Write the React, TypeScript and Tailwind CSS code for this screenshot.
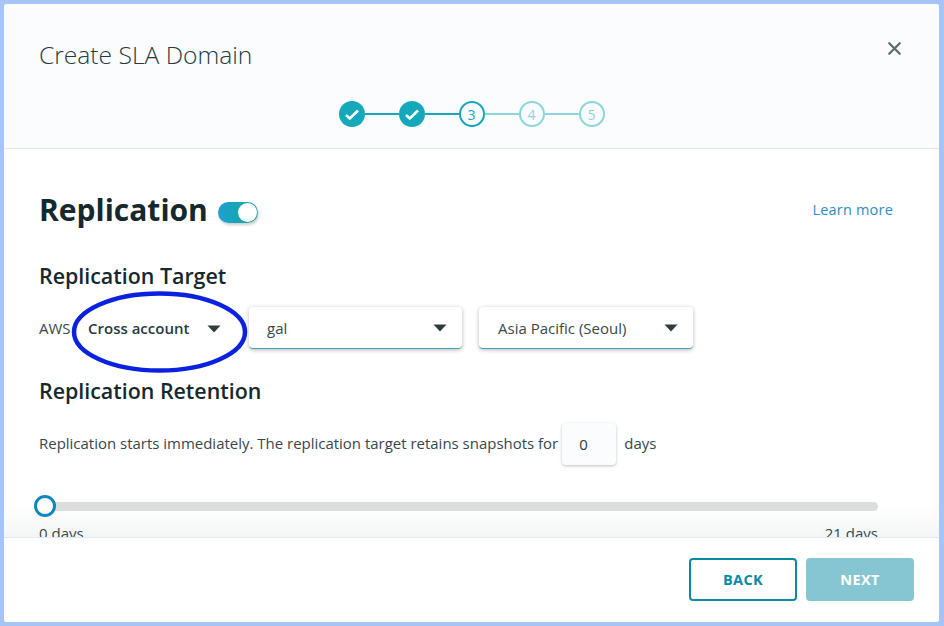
import { X } from "lucide-react";

const Caret = () => (
  <svg width="14" height="8" viewBox="0 0 14 8" className="shrink-0">
    <path d="M0.5 0.5h13L7 7.5z" fill="#2f3d41" />
  </svg>
);

const Check = () => (
  <svg width="16" height="13" viewBox="0 0 16 13" fill="none">
    <path d="M2 7l3.8 3.5L14 2.5" stroke="#fff" strokeWidth="2.6" />
  </svg>
);

function Stepper() {
  return (
    <div className="flex items-center justify-center h-[26px]">
      <div className="w-[26px] h-[26px] rounded-full bg-[#14a8bb] flex items-center justify-center"><Check /></div>
      <div className="w-[34px] h-[2px] bg-[#14a8bb]" />
      <div className="w-[26px] h-[26px] rounded-full bg-[#14a8bb] flex items-center justify-center"><Check /></div>
      <div className="w-[34px] h-[2px] bg-[#14a8bb]" />
      <div className="w-[26px] h-[26px] rounded-full border-[2px] border-[#14a8bb] flex items-center justify-center text-[14px] font-medium text-[#14a8bb]">3</div>
      <div className="w-[34px] h-[2px] bg-[#8ad5de]" />
      <div className="w-[26px] h-[26px] rounded-full border-[2px] border-[#8ad5de] flex items-center justify-center text-[14px] font-medium text-[#8ad5de]">4</div>
      <div className="w-[34px] h-[2px] bg-[#8ad5de]" />
      <div className="w-[26px] h-[26px] rounded-full border-[2px] border-[#8ad5de] flex items-center justify-center text-[14px] font-medium text-[#8ad5de]">5</div>
    </div>
  );
}

function Select({ label, className }: { label: string; className: string }) {
  return (
    <div className={"h-[42px] flex items-center justify-between pt-[2px] pr-[15px] bg-white rounded-[4px] border-b border-[#4a9fb5] shadow-[0_1px_4px_rgba(0,0,0,0.28)] text-[15px] text-[#37474b] " + className}>
      <span>{label}</span>
      <Caret />
    </div>
  );
}

export default function App() {
  return (
    <div className="w-[944px] h-[626px] bg-[#a6c4f5] pt-[4px] pl-[4px] pr-[5px] pb-[4px] font-['Open_Sans',sans-serif] overflow-hidden">
      <div className="relative h-full bg-white rounded-[3px] flex flex-col overflow-hidden">
        <div className="h-[145px] shrink-0 bg-[#fbfcfe] border-b border-[#dde8f2] relative px-[35px] pt-[33px]">
          <h1 className="text-[24.6px] leading-[36px] font-light text-[#263a3f]">Create SLA Domain</h1>
          <div className="mt-[28px]"><Stepper /></div>
          <button className="absolute right-[34px] top-[34px] text-[#5f6b6e]">
            <X size={21} strokeWidth={2.6} />
          </button>
        </div>

        <div className="relative flex-1 min-h-0 overflow-hidden pl-[35px] pr-[46px]">
          <div className="absolute left-0 right-0 bottom-0 h-[30px] bg-gradient-to-b from-white to-[#f4f5f5]" />

          <div className="relative flex items-center justify-between mt-[40px] h-[42px]">
            <div className="flex items-center">
              <h2 className="text-[30px] leading-[42px] font-bold text-[#15282d]">Replication</h2>
              <div className="relative ml-[10px] mt-[5px] w-[40px] h-[21px] rounded-full bg-gradient-to-r from-[#1ea0d0] to-[#14a89a] shadow-[1px_2px_3px_rgba(0,0,0,0.2)]">
                <div className="absolute right-[1px] top-[1px] w-[19px] h-[19px] rounded-full bg-white" />
              </div>
            </div>
            <a className="text-[14.5px] text-[#2b8fc4] tracking-[0.2px]">Learn more</a>
          </div>

          <h3 className="relative mt-[31px] text-[21.4px] leading-[28px] font-semibold text-[#15282d]">Replication Target</h3>

          <div className="relative flex items-center mt-[16px] h-[43px]">
            <span className="text-[15px] text-[#37474b] w-[31px] pt-[2px]">AWS</span>
            <div className="h-[42px] w-[179px] flex items-center justify-between pt-[2px] pl-[18px] pr-[28px] text-[15px] font-semibold text-[#263a3f]">
              <span>Cross account</span>
              <Caret />
            </div>
            <Select label="gal" className="w-[213px] pl-[18px]" />
            <Select label="Asia Pacific (Seoul)" className="w-[214px] ml-[17px] pl-[19px]" />
          </div>

          <h3 className="relative mt-[28px] text-[21.4px] leading-[28px] font-semibold text-[#15282d]">Replication Retention</h3>

          <div className="relative flex items-center mt-[18px] text-[14.97px] text-[#37474b]">
            <span className="pb-[2px]">Replication starts immediately. The replication target retains snapshots for</span>
            <div className="ml-[4px] w-[54px] h-[42px] flex items-center pl-[17px] bg-[#fbfcfe] rounded-[4px] shadow-[0_1px_3px_rgba(0,0,0,0.25)] text-[#263a3f]">0</div>
            <span className="ml-[8px] pb-[2px]">days</span>
          </div>

          <div className="relative mt-[37px] h-[9px] rounded-full bg-[#dcdedd] ml-[6px] mr-[15px]">
            <div className="absolute left-[-11px] top-[-7px] w-[22px] h-[22px] rounded-full bg-white border-[3px] border-[#0a86c0]" />
          </div>

          <div className="relative flex justify-between mt-[11px] text-[15px] text-[#37474b] mr-[15px]">
            <span>0 days</span>
            <span>21 days</span>
          </div>
        </div>

        <div className="h-[85px] shrink-0 bg-white border-t border-[#dcecf5] flex justify-end gap-[9px] pt-[20px] pr-[25px]">
          <button className="w-[108px] h-[43px] rounded-[4px] border-[2px] border-[#0a8aa5] text-[14.5px] font-bold tracking-[0.4px] text-[#0a8aa5]">BACK</button>
          <button className="w-[108px] h-[43px] rounded-[4px] bg-[#86c6d3] text-[14.5px] font-bold tracking-[0.4px] text-white">NEXT</button>
        </div>

        <svg width="180" height="86" viewBox="0 0 180 86" fill="none" className="absolute left-[66px] top-[286px] pointer-events-none">
          <ellipse cx="89.5" cy="42" rx="85.5" ry="38.5" stroke="#0a22e0" strokeWidth="4.5" />
        </svg>
      </div>
    </div>
  );
}
